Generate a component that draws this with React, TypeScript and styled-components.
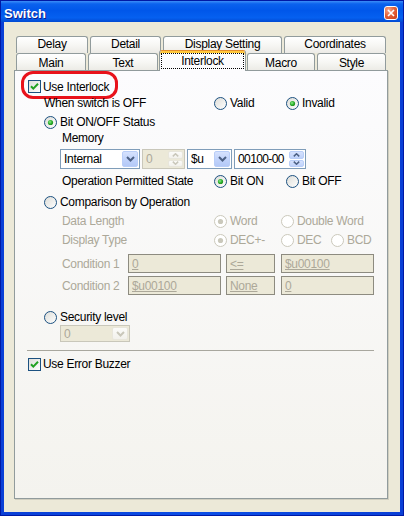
import React from "react";
import styled, { createGlobalStyle } from "styled-components";

const GlobalStyle = createGlobalStyle`
  html, body { margin: 0; padding: 0; background: #ffffff; }
  body {
    font-family: "Liberation Sans", Arial, sans-serif;
    font-size: 12px;
    letter-spacing: -0.3px;
    color: #000;
  }
  * { box-sizing: border-box; }
`;

const Window = styled.div`
  width: 404px;
  height: 516px;
  display: flex;
  flex-direction: column;
  background: linear-gradient(90deg, #0a3fd6, #0b4ee6 50%, #0a3fd6);
  border: 1px solid #0019a5;
`;

const TitleBar = styled.div`
  height: 21px;
  flex-shrink: 0;
  display: flex;
  align-items: center;
  justify-content: space-between;
  padding: 3px 5px 0 3px;
  background: linear-gradient(180deg, #3c8ef8 0%, #0b62ee 14%, #0057ea 45%, #0560f0 80%, #024ad2 100%);
`;

const TitleText = styled.div`
  font-family: "Liberation Sans", Arial, sans-serif;
  font-weight: bold;
  font-size: 13px;
  letter-spacing: 0;
  color: #ffffff;
  text-shadow: 1px 1px 0 #0f1e8a;
`;

const CloseButton = styled.div`
  width: 14px;
  height: 14px;
  border: 1px solid #ffffff;
  border-radius: 3px;
  background: radial-gradient(circle at 30% 25%, #f6a88c 0%, #e5633c 45%, #c63b16 100%);
  display: flex;
  align-items: center;
  justify-content: center;
`;

const Body = styled.div`
  flex: 1;
  margin: 0 3px 3px;
  background: #ece9d8;
  display: flex;
  flex-direction: column;
  padding: 14px 12px 13px 10px;
`;

const TabStrip = styled.div`
  display: flex;
  flex-direction: column;
  margin: 0 2px;
  flex-shrink: 0;
`;

const TabRow = styled.div`
  display: flex;
  height: 17px;
`;

const Tab = styled.div<{ $w: number; $ml?: number; $back?: boolean }>`
  width: ${(p) => p.$w}px;
  margin-left: ${(p) => p.$ml ?? 0}px;
  height: 17px;
  border: 1px solid #919b9c;
  border-bottom: none;
  border-radius: 3px 3px 0 0;
  background: linear-gradient(180deg, #ffffff 0%, #f7f7f4 50%, #ecebe6 100%);
  display: flex;
  align-items: center;
  justify-content: center;
  padding-top: ${(p) => (p.$back ? 0 : 1)}px;
  padding-bottom: ${(p) => (p.$back ? 2 : 0)}px;
  flex-shrink: 0;
`;

const ActiveTab = styled.div<{ $w: number; $ml?: number }>`
  position: relative;
  z-index: 2;
  width: ${(p) => p.$w}px;
  margin-left: ${(p) => p.$ml ?? 0}px;
  margin-top: -3px;
  height: 21px;
  border: 1px solid #919b9c;
  border-top: 1px solid #e68b2c;
  border-bottom: none;
  border-radius: 3px 3px 0 0;
  box-shadow: inset 0 2px 0 #ffc83c;
  background: #fcfcfe;
  display: flex;
  padding: 2px 1px 2px 1px;
  flex-shrink: 0;
`;

const FocusLabel = styled.div`
  flex: 1;
  border: 1px dotted #000;
  display: flex;
  align-items: center;
  justify-content: center;
  padding-bottom: 1px;
`;

const Panel = styled.div`
  flex: 1;
  border: 1px solid #919b9c;
  box-shadow: 1px 1px 0 #d0cebf;
  background: linear-gradient(180deg, #fcfcfe 0%, #f4f3ee 100%);
  padding: 0 0 0 13px;
  display: flex;
  flex-direction: column;
`;

const Highlight = styled.div`
  width: 97px;
  height: 28px;
  margin-left: -7px;
  margin-bottom: -4px;
  border: 3px solid #e8121b;
  border-radius: 12px;
  padding: 6px 0 3px 4px;
  display: flex;
  align-items: center;
  gap: 2px;
`;

const Row = styled.div<{ $mt?: number; $h?: number; $indent?: number }>`
  display: flex;
  align-items: center;
  height: ${(p) => p.$h ?? 16}px;
  margin-top: ${(p) => p.$mt ?? 0}px;
  padding-left: ${(p) => p.$indent ?? 0}px;
  flex-shrink: 0;
`;

const Label = styled.span<{ $w?: number; $disabled?: boolean }>`
  display: inline-block;
  flex-shrink: 0;
  width: ${(p) => (p.$w ? `${p.$w}px` : "auto")};
  color: ${(p) => (p.$disabled ? "#aca899" : "#000")};
  white-space: nowrap;
`;

const OptionWrap = styled.span<{ $w?: number; $disabled?: boolean }>`
  display: inline-flex;
  align-items: center;
  gap: 3px;
  flex-shrink: 0;
  width: ${(p) => (p.$w ? `${p.$w}px` : "auto")};
  color: ${(p) => (p.$disabled ? "#aca899" : "#000")};
  white-space: nowrap;
`;

const CheckWrap = styled.span`
  display: inline-flex;
  align-items: center;
  gap: 2px;
  white-space: nowrap;
`;

const Combo = styled.div<{ $w: number; $h?: number; $ml?: number; $disabled?: boolean }>`
  width: ${(p) => p.$w}px;
  height: ${(p) => p.$h ?? 20}px;
  margin-left: ${(p) => p.$ml ?? 0}px;
  border: 1px solid ${(p) => (p.$disabled ? "#c9c7ba" : "#7f9db9")};
  background: ${(p) => (p.$disabled ? "#ece9d8" : "#ffffff")};
  padding: 1px;
  display: flex;
  align-items: stretch;
  flex-shrink: 0;
`;

const FieldText = styled.div<{ $disabled?: boolean; $tight?: boolean }>`
  flex: 1;
  display: flex;
  align-items: center;
  padding-left: 2px;
  letter-spacing: ${(p) => (p.$tight ? "-0.6px" : "-0.3px")};
  color: ${(p) => (p.$disabled ? "#aca899" : "#000")};
  white-space: nowrap;
  overflow: hidden;
`;

const DropButton = styled.div<{ $disabled?: boolean }>`
  width: 16px;
  display: flex;
  align-items: center;
  justify-content: center;
  border-radius: 2px;
  border: 1px solid ${(p) => (p.$disabled ? "#e8e6dc" : "#b9cef8")};
  background: ${(p) =>
    p.$disabled
      ? "linear-gradient(180deg, #fbfbf9, #f2f1ec)"
      : "linear-gradient(180deg, #d6e2fd 0%, #c2d4fb 50%, #b4c9f7 100%)"};
`;

const SpinColumn = styled.div`
  width: 15px;
  display: flex;
  flex-direction: column;
  gap: 1px;
`;

const SpinHalf = styled.div<{ $disabled?: boolean }>`
  flex: 1;
  display: flex;
  align-items: center;
  justify-content: center;
  border-radius: 2px;
  border: 1px solid ${(p) => (p.$disabled ? "#e8e6dc" : "#b9cef8")};
  background: ${(p) =>
    p.$disabled
      ? "linear-gradient(180deg, #fbfbf9, #f2f1ec)"
      : "linear-gradient(180deg, #d6e2fd 0%, #bfd2fb 100%)"};
`;

const StaticBox = styled.div<{ $w: number; $ml?: number }>`
  width: ${(p) => p.$w}px;
  height: 19px;
  margin-left: ${(p) => p.$ml ?? 0}px;
  border: 1px solid #8d8b80;
  background: #ece9d8;
  padding: 1px 2px 1px 3px;
  display: flex;
  align-items: center;
  flex-shrink: 0;
  color: #aca899;
  text-decoration: underline;
  white-space: nowrap;
`;

const Separator = styled.div`
  margin-top: 8px;
  margin-left: -1px;
  width: 347px;
  height: 1px;
  background: #a8a79e;
  flex-shrink: 0;
`;

const CheckIcon = () => (
  <svg width="13" height="13" viewBox="0 0 13 13" style={{ flexShrink: 0 }}>
    <defs>
      <linearGradient id="cbg" x1="0" y1="0" x2="1" y2="1">
        <stop offset="0" stopColor="#dcdcd7" />
        <stop offset="1" stopColor="#ffffff" />
      </linearGradient>
    </defs>
    <rect x="0.5" y="0.5" width="12" height="12" fill="url(#cbg)" stroke="#1c5180" />
    <path d="M3 6.2 L5.3 8.6 L10 3.8" fill="none" stroke="#21a121" strokeWidth="2" />
  </svg>
);

const RadioIcon = ({ checked, disabled }: { checked?: boolean; disabled?: boolean }) => (
  <svg width="13" height="13" viewBox="0 0 13 13" style={{ flexShrink: 0 }}>
    <defs>
      <linearGradient id="rbg" x1="0" y1="0" x2="1" y2="1">
        <stop offset="0" stopColor="#dcdcd7" />
        <stop offset="1" stopColor="#ffffff" />
      </linearGradient>
      <radialGradient id="rdot" cx="0.4" cy="0.4" r="0.6">
        <stop offset="0" stopColor="#8fe88f" />
        <stop offset="0.6" stopColor="#2fb52f" />
        <stop offset="1" stopColor="#1d8d1d" />
      </radialGradient>
    </defs>
    <circle
      cx="6.5"
      cy="6.5"
      r="6"
      fill={disabled ? "#ffffff" : "url(#rbg)"}
      stroke={disabled ? "#cac8bb" : "#1c5180"}
    />
    {checked && (
      <circle cx="6.5" cy="6.5" r="2.6" fill={disabled ? "#cac8bb" : "url(#rdot)"} />
    )}
  </svg>
);

const Chevron = ({ disabled }: { disabled?: boolean }) => (
  <svg width="9" height="6" viewBox="0 0 9 6">
    <path
      d="M1 1 L4.5 4.5 L8 1"
      fill="none"
      stroke={disabled ? "#c9c7ba" : "#4d6185"}
      strokeWidth="2"
    />
  </svg>
);

const SmallArrow = ({ up, disabled }: { up?: boolean; disabled?: boolean }) => (
  <svg width="7" height="4" viewBox="0 0 7 4">
    <path
      d={up ? "M0.8 3.4 L3.5 0.8 L6.2 3.4" : "M0.8 0.6 L3.5 3.2 L6.2 0.6"}
      fill="none"
      stroke={disabled ? "#c9c7ba" : "#4d6185"}
      strokeWidth="1.5"
    />
  </svg>
);

const Radio = ({
  label,
  checked,
  disabled,
  w,
}: {
  label: string;
  checked?: boolean;
  disabled?: boolean;
  w?: number;
}) => (
  <OptionWrap $w={w} $disabled={disabled}>
    <RadioIcon checked={checked} disabled={disabled} />
    <span>{label}</span>
  </OptionWrap>
);

const ComboBox = ({
  text,
  w,
  h,
  ml,
  disabled,
}: {
  text: string;
  w: number;
  h?: number;
  ml?: number;
  disabled?: boolean;
}) => (
  <Combo $w={w} $h={h} $ml={ml} $disabled={disabled}>
    <FieldText $disabled={disabled}>{text}</FieldText>
    <DropButton $disabled={disabled}>
      <Chevron disabled={disabled} />
    </DropButton>
  </Combo>
);

const SpinBox = ({
  text,
  w,
  ml,
  disabled,
  tight,
}: {
  text: string;
  w: number;
  ml?: number;
  disabled?: boolean;
  tight?: boolean;
}) => (
  <Combo $w={w} $ml={ml} $disabled={disabled}>
    <FieldText $disabled={disabled} $tight={tight}>
      {text}
    </FieldText>
    <SpinColumn>
      <SpinHalf $disabled={disabled}>
        <SmallArrow up disabled={disabled} />
      </SpinHalf>
      <SpinHalf $disabled={disabled}>
        <SmallArrow disabled={disabled} />
      </SpinHalf>
    </SpinColumn>
  </Combo>
);

const topTabs = [
  { label: "Delay", w: 72, ml: 0 },
  { label: "Detail", w: 71, ml: 2 },
  { label: "Display Setting", w: 119, ml: 2 },
  { label: "Coordinates", w: 102, ml: 2 },
];

const bottomTabs = [
  { label: "Main", w: 70, ml: 0 },
  { label: "Text", w: 70, ml: 2 },
  { label: "Interlock", w: 87, ml: 1, active: true },
  { label: "Macro", w: 68, ml: 1 },
  { label: "Style", w: 69, ml: 2 },
];

export default function App() {
  return (
    <>
      <GlobalStyle />
      <Window>
        <TitleBar>
          <TitleText>Switch</TitleText>
          <CloseButton>
            <svg width="8" height="8" viewBox="0 0 8 8">
              <path d="M1 1 L7 7 M7 1 L1 7" stroke="#ffffff" strokeWidth="1.6" />
            </svg>
          </CloseButton>
        </TitleBar>
        <Body>
          <TabStrip>
            <TabRow>
              {topTabs.map((t) => (
                <Tab key={t.label} $w={t.w} $ml={t.ml} $back>
                  {t.label}
                </Tab>
              ))}
            </TabRow>
            <TabRow>
              {bottomTabs.map((t) =>
                t.active ? (
                  <ActiveTab key={t.label} $w={t.w} $ml={t.ml}>
                    <FocusLabel>{t.label}</FocusLabel>
                  </ActiveTab>
                ) : (
                  <Tab key={t.label} $w={t.w} $ml={t.ml}>
                    {t.label}
                  </Tab>
                )
              )}
            </TabRow>
          </TabStrip>
          <Panel>
            <Highlight>
              <CheckIcon />
              <span>Use Interlock</span>
            </Highlight>
            <Row $indent={16}>
              <Label $w={170}>When switch is OFF</Label>
              <Radio label="Valid" w={72} />
              <Radio label="Invalid" checked />
            </Row>
            <Row $mt={3} $indent={16}>
              <Radio label="Bit ON/OFF Status" checked />
            </Row>
            <Row $indent={34}>
              <Label>Memory</Label>
            </Row>
            <Row $mt={3} $h={20} $indent={32}>
              <ComboBox text="Internal" w={80} />
              <SpinBox text="0" w={43} ml={2} disabled />
              <ComboBox text="$u" w={45} ml={2} />
              <SpinBox text="00100-00" w={72} ml={2} tight />
            </Row>
            <Row $mt={4} $indent={34}>
              <Label $w={152}>Operation Permitted State</Label>
              <Radio label="Bit ON" w={72} checked />
              <Radio label="Bit OFF" />
            </Row>
            <Row $mt={5} $indent={16}>
              <Radio label="Comparison by Operation" />
            </Row>
            <Row $mt={3} $indent={34}>
              <Label $w={152} $disabled>
                Data Length
              </Label>
              <Radio label="Word" w={67} checked disabled />
              <Radio label="Double Word" disabled />
            </Row>
            <Row $mt={3} $indent={34}>
              <Label $w={152} $disabled>
                Display Type
              </Label>
              <Radio label="DEC+-" w={67} checked disabled />
              <Radio label="DEC" w={50} disabled />
              <Radio label="BCD" disabled />
            </Row>
            <Row $mt={6} $h={19} $indent={34}>
              <Label $w={66} $disabled>
                Condition 1
              </Label>
              <StaticBox $w={93}>0</StaticBox>
              <StaticBox $w={49} $ml={5}>
                &lt;=
              </StaticBox>
              <StaticBox $w={93} $ml={6}>
                $u00100
              </StaticBox>
            </Row>
            <Row $mt={3} $h={19} $indent={34}>
              <Label $w={66} $disabled>
                Condition 2
              </Label>
              <StaticBox $w={93}>$u00100</StaticBox>
              <StaticBox $w={49} $ml={5}>
                None
              </StaticBox>
              <StaticBox $w={93} $ml={6}>
                0
              </StaticBox>
            </Row>
            <Row $mt={14} $indent={16}>
              <Radio label="Security level" />
            </Row>
            <Row $h={17} $indent={32}>
              <ComboBox text="0" w={70} h={17} disabled />
            </Row>
            <Separator />
            <Row $mt={5}>
              <CheckWrap>
                <CheckIcon />
                <span>Use Error Buzzer</span>
              </CheckWrap>
            </Row>
          </Panel>
        </Body>
      </Window>
    </>
  );
}
